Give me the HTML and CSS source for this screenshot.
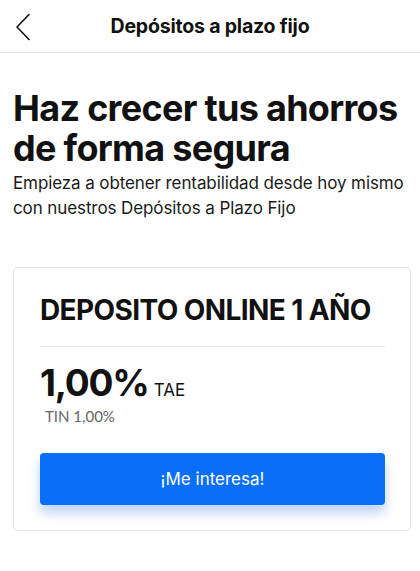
FILE: index.html
```html
<!DOCTYPE html>
<html lang="es">
<head>
    <meta charset="UTF-8">
    <meta name="viewport" content="width=device-width, initial-scale=1.0">
    <title>Depósitos a plazo fijo</title>
    <link rel="stylesheet" href="styles.css">
</head>
<body>
    <div class="top-bar">
        <span class="back-btn">
            <svg width="16" height="28" viewBox="0 0 16 28">
                <path d="M14 1.5 L2 14 L14 26.5" fill="none" stroke="#111" stroke-width="1.6" stroke-linecap="round" stroke-linejoin="round"/>
            </svg>
        </span>
        <h1 class="top-title">Depósitos a plazo fijo</h1>
    </div>

    <div class="content">
        <h2 class="headline">Haz crecer tus ahorros de forma segura</h2>
        <p class="intro">Empieza a obtener rentabilidad desde hoy mismo con nuestros Depósitos a Plazo Fijo</p>

        <!-- tarjeta del producto -->
        <div class="deposit-card">
            <h3 class="deposit-name">DEPOSITO ONLINE 1 AÑO</h3>
            <div class="rate-row">
                <span class="rate-value">1,00%</span>
                <span class="rate-label">TAE</span>
            </div>
            <div class="tin">TIN 1,00%</div>
            <button class="cta-btn">¡Me interesa!</button>
        </div>
    </div>
</body>
</html>
```

FILE: styles.css
```css
body {
    margin: 0;
    background-color: #fff;
    font-family: "Inter", "Noto Sans", sans-serif;
    color: #111;
}

.top-bar {
    position: relative;
    height: 52px;
    display: flex;
    align-items: center;
    justify-content: center;
    border-bottom: 1px solid #e4e4e4;
}

.back-btn {
    position: absolute;
    left: 15px;
    top: 13px;
    display: flex;
}

.top-title {
    margin: 0;
    font-size: 19.5px;
    font-weight: 700;
    letter-spacing: -0.2px;
}

.content {
    padding: 0 9px 0 13px;
}

.headline {
    margin: 35px 0 0;
    font-size: 36px;
    line-height: 40px;
    font-weight: 700;
    letter-spacing: -0.7px;
}

.intro {
    margin: 3px 0 0;
    font-size: 17px;
    line-height: 25px;
    letter-spacing: -0.1px;
    color: #1a1a1a;
}

.deposit-card {
    margin-top: 46px;
    border: 1px solid #e6e6e6;
    border-radius: 5px;
    padding: 26px 25px 25px 26px;
}

.deposit-name {
    margin: 0;
    padding-bottom: 20px;
    border-bottom: 1px solid #e8e8e8;
    font-size: 28px;
    line-height: 32px;
    font-weight: 700;
    letter-spacing: -0.6px;
}

.rate-row {
    display: flex;
    align-items: baseline;
    gap: 5px;
    margin-top: 14px;
}

.rate-value {
    font-size: 37px;
    line-height: 44px;
    font-weight: 700;
    letter-spacing: -1.2px;
}

.rate-label {
    font-size: 17px;
}

.tin {
    margin: 2px 0 0 5px;
    font-family: "Lato", sans-serif;
    font-size: 15px;
    color: #666;
}

.cta-btn {
    display: block;
    width: 100%;
    height: 52px;
    margin-top: 28px;
    border: none;
    border-radius: 4px;
    background-color: #0a6ff8;
    color: #fff;
    font-family: "Inter", sans-serif;
    font-size: 17px;
    box-shadow: 0 8px 12px rgba(20, 100, 220, 0.28);
    cursor: pointer;
}
```
